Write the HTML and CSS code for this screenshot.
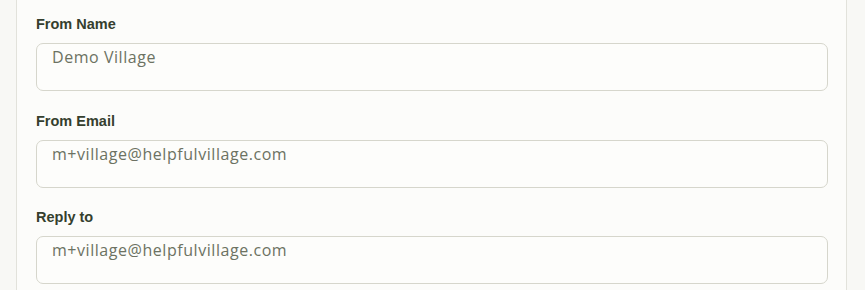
FILE: index.html
```html
<!DOCTYPE html>
<html>
<head>
<meta charset="utf-8">
<link rel="stylesheet" href="styles.css">
</head>
<body>
<div class="card">
  <div class="group">
    <label class="label" for="fromName">From Name</label>
    <input class="field" id="fromName" type="text" value="Demo Village">
  </div>
  <div class="group">
    <label class="label" for="fromEmail">From Email</label>
    <input class="field" id="fromEmail" type="text" value="m+village@helpfulvillage.com">
  </div>
  <div class="group">
    <label class="label" for="replyTo">Reply to</label>
    <input class="field" id="replyTo" type="text" value="m+village@helpfulvillage.com">
  </div>
</div>
</body>
</html>
```

FILE: styles.css
```css
html, body {
  margin: 0;
  padding: 0;
  background: #f8f8f5;
}
body {
  height: 290px;
  overflow: hidden;
}
.card {
  margin: -20px 0 0 16px;
  width: 831px;
  box-sizing: border-box;
  height: 310px;
  background: #fcfcfa;
  border-left: 1px solid #e2e2db;
  border-right: 1px solid #e2e2db;
  padding: 36px 20px 0 19px;
  display: flex;
  flex-direction: column;
  gap: 21.5px;
}
.group {
  display: flex;
  flex-direction: column;
}
.label {
  font-family: "Liberation Sans", Arial, sans-serif;
  font-weight: bold;
  font-size: 14.5px;
  line-height: 16px;
  color: #353f2e;
  margin-bottom: 11px;
}
.field {
  display: block;
  width: 792px;
  height: 48px;
  box-sizing: border-box;
  margin: 0;
  padding: 3px 15px 23px;
  font-family: "Open Sans", "Noto Sans", sans-serif;
  font-size: 16px;
  line-height: 20px;
  letter-spacing: 0.55px;
  color: #6c7262;
  background: #fdfdfb;
  border: 1px solid #d6d6cc;
  border-radius: 7px;
  outline: none;
}
```
